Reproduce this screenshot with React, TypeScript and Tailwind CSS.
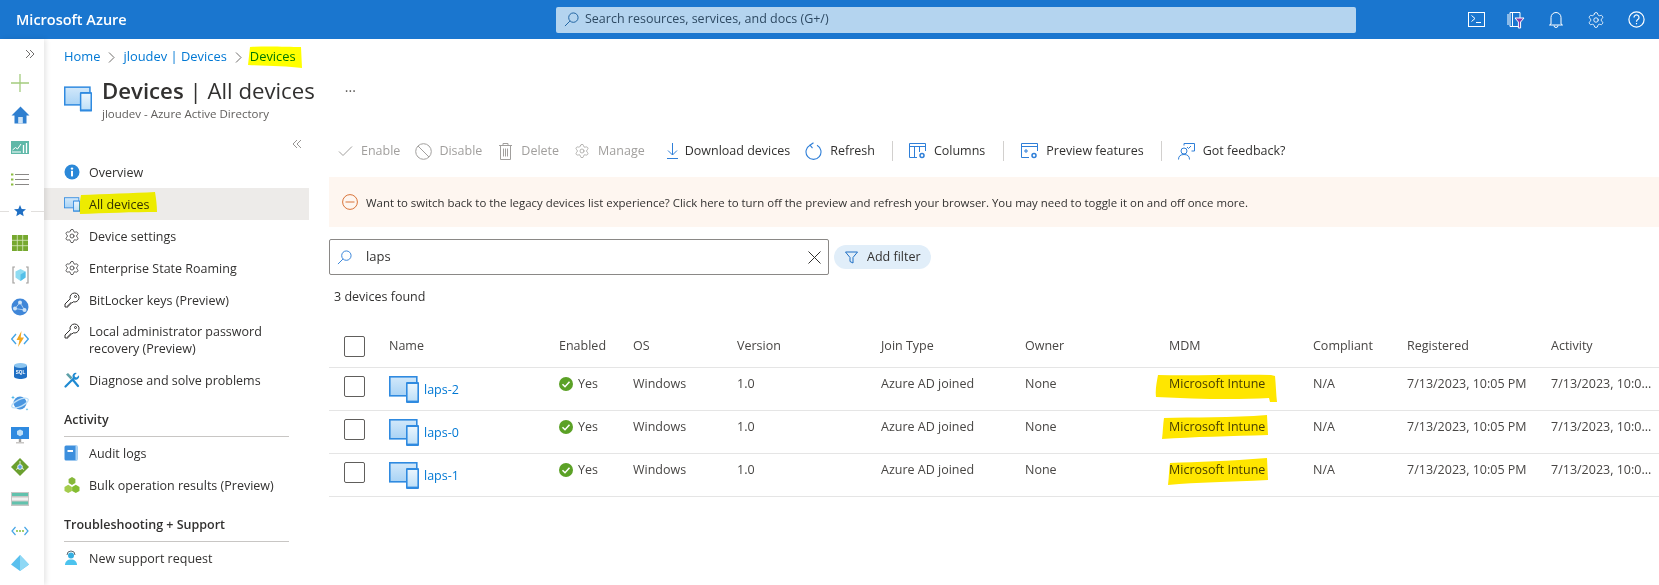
import React from "react";
import { Settings } from "lucide-react";

function DeviceIcon({ w = 28, h = 26, id }: { w?: number; h?: number; id: string }) {
  return (
    <svg width={w} height={h} viewBox="0 0 30 27" className="shrink-0">
      <defs>
        <linearGradient id={id + "a"} x1="0" y1="0" x2="0" y2="1">
          <stop offset="0" stopColor="#d2e8fa" />
          <stop offset="1" stopColor="#a9d3f5" />
        </linearGradient>
        <linearGradient id={id + "b"} x1="0" y1="0" x2="0" y2="1">
          <stop offset="0" stopColor="#eaf5fd" />
          <stop offset="1" stopColor="#bfe0f8" />
        </linearGradient>
      </defs>
      <rect x="0.8" y="0.8" width="27" height="19" fill={`url(#${id}a)`} stroke="#2f8ae0" strokeWidth="1.6" />
      <rect x="17" y="6" width="13" height="21" rx="1" fill="#2f8ae0" />
      <rect x="18.6" y="8" width="9.8" height="16.6" fill={`url(#${id}b)`} />
    </svg>
  );
}

function Gear({ c = "#323130", s = 16 }: { c?: string; s?: number }) {
  return <Settings size={s} color={c} strokeWidth={1.15} className="shrink-0" />;
}

function Key() {
  return (
    <svg width="16" height="16" viewBox="0 0 16 16" fill="none" stroke="#323130" strokeWidth="1" className="shrink-0">
      <path d="M10.5 1a4.5 4.5 0 0 0-4.3 5.8L1 12v3h3v-2h2v-2h2l1.2-1.2A4.5 4.5 0 1 0 10.5 1z" />
      <circle cx="11.5" cy="4.5" r="1" />
    </svg>
  );
}

function NavIcon({ name }: { name: string }) {
  switch (name) {
    case "info":
      return (
        <svg width="16" height="16" viewBox="0 0 16 16" className="shrink-0">
          <circle cx="8" cy="8" r="7.5" fill="#2b88d8" />
          <rect x="7" y="6.8" width="2" height="5.6" fill="#fff" />
          <circle cx="8" cy="4.6" r="1.2" fill="#fff" />
        </svg>
      );
    case "device":
      return <DeviceIcon w={16} h={15} id="nav" />;
    case "gear":
      return <Gear />;
    case "key":
      return <Key />;
    case "wrench":
      return (
        <svg width="16" height="16" viewBox="0 0 16 16" className="shrink-0">
          <path d="M1.500 14.500l6-6M9 8l5 6" stroke="#1f8ad2" strokeWidth="2.200" strokeLinecap="round" />
          <path d="M2 2.600l2-1.600 4.500 4.600-1.800 1.800z" fill="#5ea0a8" />
          <path d="M15 3.200l-2.300 2.200-1.700-.4-.4-1.700L12.800 1a3.400 3.400 0 0 0-4 4.800L7 7.600l1.600 1.600 1.800-1.800A3.400 3.400 0 0 0 15 3.200z" fill="#1f8ad2" />
        </svg>
      );
    case "log":
      return (
        <svg width="14" height="16" viewBox="0 0 14 16" className="shrink-0">
          <rect x="0.500" y="0.500" width="13" height="15" rx="1.500" fill="#3d8fdd" />
          <rect x="11.500" y="0.500" width="2" height="15" fill="#a9d3f5" />
          <rect x="3.500" y="5" width="5.500" height="2" fill="#fff" />
        </svg>
      );
    case "bulk":
      return (
        <svg width="16" height="16" viewBox="0 0 16 16" className="shrink-0">
          <path d="M8 0l3.400 2v4L8 8 4.600 6V2z" fill="#86b83a" />
          <path d="M4.200 7.800l3.700 2.100v4L4.200 16 .5 13.900v-4z" fill="#a4cc4d" />
          <path d="M11.800 7.800l3.700 2.100v4L11.800 16l-3.700-2.100v-4z" fill="#84bd32" />
        </svg>
      );
    case "support":
      return (
        <svg width="14" height="16" viewBox="0 0 14 16" className="shrink-0">
          <path d="M3 5a4 4 0 0 1 8 0" fill="none" stroke="#5c6b73" strokeWidth="1" />
          <circle cx="7" cy="5.500" r="3" fill="#35aee0" />
          <path d="M1 15c0-3.500 2.500-5.500 6-5.500s6 2 6 5.500z" fill="#4cc3ee" />
        </svg>
      );
  }
  return null;
}

function NavItem({ icon, text, tall }: { icon: string; text: React.ReactNode; tall?: boolean }) {
  return (
    <div className={tall ? "flex h-12 items-start pl-5 pt-[7px]" : "flex h-8 items-center pl-5"}>
      <div className="w-[25px] shrink-0">
        <NavIcon name={icon} />
      </div>
      <span className="text-[12.5px] leading-[17px] text-[#323130]">{text}</span>
    </div>
  );
}

function NavHeader({ children }: { children: React.ReactNode }) {
  return (
    <div className="ml-5 mr-5 flex h-[41px] items-end border-b border-[#c8c6c4] pb-[8px] text-[12.5px] leading-[17px] font-semibold text-[#323130]">
      {children}
    </div>
  );
}

function RailSlot({ children }: { children: React.ReactNode }) {
  return <div className="flex h-8 w-full items-center justify-center pr-[4px]">{children}</div>;
}

function Rail() {
  return (
    <div className="relative z-10 flex h-full w-11 shrink-0 flex-col bg-white shadow-[2px_0_5px_rgba(0,0,0,0.1)]">
      <div className="flex h-[28px] items-center justify-end pr-[9px] pt-[1px]">
        <svg width="10" height="10" viewBox="0 0 10 10" fill="none" stroke="#605e5c" strokeWidth="0.9">
          <path d="M1 1l4 4-4 4M5 1l4 4-4 4" />
        </svg>
      </div>
      <RailSlot>
        <svg width="18" height="18" viewBox="0 0 18 18"><path d="M9 0v18M0 9h18" stroke="#a4cc7e" strokeWidth="1.300" /></svg>
      </RailSlot>
      <RailSlot>
        <svg width="19" height="18" viewBox="0 0 19 18">
          <path d="M9.500 0.500L0.500 9.500h3V17.500h12V9.500h3z" fill="#2f7fd0" />
          <rect x="7.200" y="11" width="4.600" height="6.500" fill="#cfe4f7" />
        </svg>
      </RailSlot>
      <RailSlot>
        <svg width="18" height="13" viewBox="0 0 18 13">
          <rect width="18" height="13" fill="#5fb8a8" />
          <path d="M1.500 9l3-2.500 2 1.500L10 3" stroke="#fff" strokeWidth="1" fill="none" />
          <path d="M1 11h9" stroke="#fff" strokeWidth="1" />
          <path d="M12.500 4v8M15.500 2v10" stroke="#fff" strokeWidth="1.300" />
        </svg>
      </RailSlot>
      <RailSlot>
        <svg width="18" height="13" viewBox="0 0 18 13">
          <path d="M4 1.500h14M4 6.500h14M4 11.500h14" stroke="#8a8886" strokeWidth="1.200" />
          <path d="M0 1.500h2.400M0 6.500h2.400M0 11.500h2.400" stroke="#8cbd3f" strokeWidth="2" />
        </svg>
      </RailSlot>
      <div className="relative flex h-8 items-center justify-center pr-[4px]">
        <div className="absolute left-0 top-1/2 h-px w-[9px] bg-[#e1dfdd]" />
        <div className="absolute right-0 top-1/2 h-px w-[13px] bg-[#e1dfdd]" />
        <svg width="12" height="12" viewBox="0 0 12 12"><path d="M6 0l1.700 3.900 4.300.4-3.200 2.800.9 4.200L6 9.100l-3.700 2.200.9-4.200L0 4.300l4.300-.4z" fill="#1f6fc4" /></svg>
      </div>
      <RailSlot>
        <svg width="16" height="16" viewBox="0 0 16 16">
          <rect width="16" height="16" fill="#76a82f" />
          <path d="M5.300 0v16M10.700 0v16M0 5.300h16M0 10.700h16" stroke="#d8e8bf" strokeWidth="0.800" />
        </svg>
      </RailSlot>
      <RailSlot>
        <svg width="17" height="18" viewBox="0 0 17 18">
          <path d="M3 1H1v16h2M14 1h2v16h-2" fill="none" stroke="#a19f9d" strokeWidth="1.200" />
          <path d="M8.500 3l5 2.500v6L8.500 15l-5-3.500v-6z" fill="#8fdcf2" />
          <path d="M8.500 8.500L13.500 5.500v6L8.500 15z" fill="#55bfe8" />
        </svg>
      </RailSlot>
      <RailSlot>
        <svg width="18" height="18" viewBox="0 0 18 18">
          <circle cx="9" cy="9" r="8.500" fill="#3f86d8" />
          <circle cx="9" cy="4.500" r="2" fill="#cfe4f7" />
          <circle cx="4" cy="10.500" r="2" fill="#cfe4f7" />
          <circle cx="13.500" cy="12" r="2" fill="#cfe4f7" />
          <path d="M9 4.500L4 10.500 13.500 12z" stroke="#cfe4f7" strokeWidth="0.700" fill="none" />
        </svg>
      </RailSlot>
      <RailSlot>
        <svg width="18" height="16" viewBox="0 0 18 16">
          <path d="M5 3L0.700 8 5 13M13 3l4.300 5L13 13" fill="none" stroke="#45a5e6" strokeWidth="1.400" />
          <path d="M10.500 0L5.500 9h3L7 16l6-9.500H9.700z" fill="#f2a71e" />
        </svg>
      </RailSlot>
      <RailSlot>
        <svg width="13" height="16" viewBox="0 0 13 16">
          <path d="M0 2.500v11C0 15 3 16 6.500 16S13 15 13 13.500v-11z" fill="#1f6fc4" />
          <ellipse cx="6.500" cy="2.500" rx="6.500" ry="2.500" fill="#8cc5f0" />
          <text x="6.500" y="10.500" textAnchor="middle" fontSize="4.600" fontWeight="700" fill="#fff" fontFamily="Liberation Sans">SQL</text>
        </svg>
      </RailSlot>
      <RailSlot>
        <svg width="18" height="18" viewBox="0 0 18 18">
          <circle cx="9" cy="9" r="6.500" fill="#4a96e0" />
          <ellipse cx="9" cy="9" rx="9" ry="3.500" transform="rotate(-25 9 9)" fill="none" stroke="#bfe0f8" strokeWidth="1.300" />
          <path d="M2 1.500l.6 1.400L4 3.500l-1.400.6L2 5.500l-.6-1.400L0 3.500l1.400-.6zM16 14l.4 1 1 .4-1 .4-.4 1-.4-1-1-.4 1-.4z" fill="#4ab5e8" />
        </svg>
      </RailSlot>
      <RailSlot>
        <svg width="18" height="17" viewBox="0 0 18 17">
          <rect width="18" height="12" fill="#2f8ae0" />
          <path d="M9 2.500l3 1.500v3.500l-3 1.800-3-1.800V4z" fill="#bfe0f8" />
          <rect x="7.800" y="12" width="2.400" height="3" fill="#a19f9d" />
          <rect x="5" y="15" width="8" height="1.500" fill="#c8c6c4" />
        </svg>
      </RailSlot>
      <RailSlot>
        <svg width="18" height="18" viewBox="0 0 18 18">
          <path d="M9 0l9 9-9 9-9-9z" fill="#6ba02f" />
          <circle cx="9" cy="9" r="2.400" fill="#5ea0e8" stroke="#fff" strokeWidth="0.800" />
          <path d="M9 3v3.500M5 11.500l2.500-1.500M13 11.500L10.500 10" stroke="#fff" strokeWidth="0.800" />
        </svg>
      </RailSlot>
      <RailSlot>
        <svg width="18" height="14" viewBox="0 0 18 14">
          <rect width="18" height="14" fill="#c8c6c4" />
          <rect x="1" y="1" width="16" height="3" fill="#62c2ad" />
          <rect x="1" y="5.500" width="16" height="3" fill="#f3f2f1" />
          <rect x="1" y="9.500" width="16" height="3" fill="#62c2ad" />
        </svg>
      </RailSlot>
      <RailSlot>
        <svg width="18" height="10" viewBox="0 0 18 10">
          <path d="M4.500 1L1 5l3.500 4M13.500 1L17 5l-3.500 4" fill="none" stroke="#45a5e6" strokeWidth="1.200" />
          <circle cx="6" cy="5" r="0.900" fill="#76b82a" />
          <circle cx="9" cy="5" r="0.900" fill="#76b82a" />
          <circle cx="12" cy="5" r="0.900" fill="#76b82a" />
        </svg>
      </RailSlot>
      <RailSlot>
        <svg width="18" height="16" viewBox="0 0 18 16">
          <path d="M9 0L0 9.500 9 16l9-6.500z" fill="#5ac0ee" />
          <path d="M9 0v16l9-6.500z" fill="#8fd8f5" />
        </svg>
      </RailSlot>
    </div>
  );
}

function TopBar() {
  return (
    <div className="relative flex h-[39px] shrink-0 items-center bg-[#1a76cf]">
      <span className="ml-4 w-[540px] text-[14.5px] font-semibold text-white">Microsoft Azure</span>
      <div className="flex h-[26px] w-[800px] items-center rounded-[2px] bg-[#b4d4ef] pl-[8px]">
        <svg width="15" height="15" viewBox="0 0 16 16" fill="none" stroke="#1a5f9e" strokeWidth="1" className="mr-[6px]">
          <circle cx="10" cy="6" r="5" />
          <path d="M6.300 9.700L1 15" />
        </svg>
        <span className="text-[12.5px] text-[#2e4a63]">Search resources, services, and docs (G+/)</span>
      </div>
      <div className="ml-auto flex items-center pr-[3px]">
        <div className="flex w-10 justify-center">
          <svg width="17" height="15" viewBox="0 0 17 15" fill="none" stroke="#fff" strokeWidth="1">
            <rect x="0.500" y="0.500" width="16" height="14" />
            <path d="M3.500 3.500l3.500 3-3.500 3M8 10.500h5" />
          </svg>
        </div>
        <div className="flex w-10 justify-center">
          <svg width="18" height="18" viewBox="0 0 18 18" fill="none">
            <path d="M3 1.500h10v14H3z" stroke="#fff" strokeWidth="1" />
            <path d="M1 3v11M5.500 1.500v14" stroke="#fff" strokeWidth="1" />
            <path d="M8 7h9l-3.400 4v6h-2.200v-6z" fill="#8a3aa8" stroke="#fff" strokeWidth="1" />
          </svg>
        </div>
        <div className="flex w-10 justify-center">
          <svg width="14" height="17" viewBox="0 0 14 17" fill="none" stroke="#fff" strokeWidth="1">
            <path d="M2 13V6.500a5 5 0 0 1 10 0V13l1.500 1h-13zM5 14.500a2 2 0 0 0 4 0" />
          </svg>
        </div>
        <div className="flex w-10 justify-center">
          <Gear c="#ffffff" s={18} />
        </div>
        <div className="flex w-10 justify-center">
          <svg width="17" height="17" viewBox="0 0 17 17" fill="none" stroke="#fff" strokeWidth="1.200">
            <circle cx="8.500" cy="8.500" r="7.600" />
            <path d="M6 6.500a2.500 2.500 0 1 1 3.800 2.100c-.9.600-1.300 1-1.300 2.100" />
            <path d="M8.500 12v1.300" />
          </svg>
        </div>
      </div>
    </div>
  );
}

function ToolItem({ icon, text, disabled, cls }: { icon: React.ReactNode; text: string; disabled?: boolean; cls: string }) {
  return (
    <div className={"flex items-center " + cls}>
      {icon}
      <span className={"text-[12.5px] " + (disabled ? "text-[#a19f9d]" : "text-[#323130]")}>{text}</span>
    </div>
  );
}

function Sep({ cls }: { cls: string }) {
  return <div className={"h-5 w-px bg-[#d2d0ce] " + cls} />;
}

function Toolbar() {
  const blue = "#2f7fd8";
  return (
    <div className="flex h-[44px] items-center pl-[9px] pt-[2px]">
      <ToolItem disabled cls="mr-[15px]" text="Enable" icon={
        <svg width="15" height="12" viewBox="0 0 15 12" fill="none" stroke="#a19f9d" strokeWidth="1" className="mr-[8px]"><path d="M1 6.500L5 10.500 14 1.500" /></svg>
      } />
      <ToolItem disabled cls="mr-[17px]" text="Disable" icon={
        <svg width="17" height="17" viewBox="0 0 17 17" fill="none" stroke="#a19f9d" strokeWidth="1" className="mr-[7px]"><circle cx="8.500" cy="8.500" r="7.800" /><path d="M3 3l11 11" /></svg>
      } />
      <ToolItem disabled cls="mr-[15px]" text="Delete" icon={
        <svg width="13" height="17" viewBox="0 0 13 17" fill="none" stroke="#a19f9d" strokeWidth="1" className="mr-[9px]"><path d="M0 2.500h13M4 2.500V.5h5v2M1.500 2.500v14h10v-14M4.500 5.500v8M6.500 5.500v8M8.500 5.500v8" /></svg>
      } />
      <ToolItem disabled cls="mr-[18px]" text="Manage" icon={
        <span className="mr-[8px]"><Gear c="#a19f9d" /></span>
      } />
      <ToolItem cls="mr-[15px]" text="Download devices" icon={
        <svg width="11" height="16" viewBox="0 0 11 16" fill="none" stroke={blue} strokeWidth="1" className="mr-[7px] ml-[4px]"><path d="M5.500 0v12M1 7.500l4.500 4.500L10 7.500M0 15.500h11" /></svg>
      } />
      <ToolItem cls="" text="Refresh" icon={
        <svg width="17" height="18" viewBox="0 0 17 18" fill="none" stroke={blue} strokeWidth="1.100" className="mr-[8px]"><path d="M5 3.200a7.500 7.500 0 1 0 7 0" /><path d="M8.500.8L5 3.200l2.500 3" /></svg>
      } />
      <Sep cls="ml-[17px] mr-[16px]" />
      <ToolItem cls="" text="Columns" icon={
        <svg width="17" height="16" viewBox="0 0 17 16" fill="none" stroke={blue} strokeWidth="1" className="mr-[8px]"><path d="M8 14.500H.5V.5h16V8M.5 3.500h16M5.500 3.500v11M10.500 3.500V9" /><circle cx="13" cy="12.500" r="2" strokeWidth="1.500" /></svg>
      } />
      <Sep cls="ml-[18px] mr-[17px]" />
      <ToolItem cls="" text="Preview features" icon={
        <svg width="17" height="16" viewBox="0 0 17 16" fill="none" stroke={blue} strokeWidth="1" className="mr-[8px]"><path d="M8 14.500H.5V.5h16V8M.5 3.500h16M4 7h2v2H4z" /><circle cx="13" cy="12.500" r="2" strokeWidth="1.500" /></svg>
      } />
      <Sep cls="ml-[17px] mr-[16px]" />
      <ToolItem cls="" text="Got feedback?" icon={
        <svg width="17" height="17" viewBox="0 0 17 17" fill="none" stroke={blue} strokeWidth="1" className="mr-[8px]"><circle cx="6" cy="8" r="3" /><path d="M.5 16.500c0-3.500 2-5 5.500-5s5.500 1.500 5.500 5M6 2.500V.5h10.500v7.500h-3M9 4l1.500 1.500L13 3" /></svg>
      } />
    </div>
  );
}

const cols = "grid grid-cols-[60px_170px_74px_104px_144px_144px_144px_144px_94px_144px_1fr]";

function Check() {
  return <div className="ml-[15px] h-[21px] w-[21px] rounded-[2px] border border-[#605e5c] bg-white" />;
}

function Row({ name, idx, mark }: { name: string; idx: number; mark: React.ReactNode }) {
  return (
    <div className={cols + " relative h-[43px] border-b border-[#e5e5e5] text-[12.5px] text-[#484644]"}>
      <div className="pt-[8px]"><Check /></div>
      <div className="flex items-start pt-[8px]">
        <DeviceIcon id={"row" + idx} w={30} h={27} />
        <span className="ml-[5px] mt-[5px] leading-[17px] text-[#0078d4]">{name}</span>
      </div>
      <div className="flex items-center pb-[10px]">
        <svg width="14" height="14" viewBox="0 0 14 14" className="mr-[5px]">
          <circle cx="7" cy="7" r="7" fill="#5ba126" />
          <path d="M3.500 7.200l2.500 2.500 4.500-5" fill="none" stroke="#fff" strokeWidth="1.500" />
        </svg>
        Yes
      </div>
      <div className="flex items-center pb-[10px]">Windows</div>
      <div className="flex items-center pb-[10px]">1.0</div>
      <div className="flex items-center pb-[10px]">Azure AD joined</div>
      <div className="flex items-center pb-[10px]">None</div>
      <div className="relative flex items-center pb-[10px]">
        Microsoft Intune
        {mark}
      </div>
      <div className="flex items-center pb-[10px]">N/A</div>
      <div className="flex items-center pb-[10px]">7/13/2023, 10:05 PM</div>
      <div className="flex items-center pb-[10px]">7/13/2023, 10:0...</div>
    </div>
  );
}

function Mark({ cls, d, w, h, color = "#ffe600" }: { cls: string; d: string; w: number; h: number; color?: string }) {
  return (
    <svg width={w} height={h} viewBox={`0 0 ${w} ${h}`} className={"absolute mix-blend-multiply " + cls}>
      <path d={d} fill={color} />
    </svg>
  );
}

function Table() {
  const head = ["", "Name", "Enabled", "OS", "Version", "Join Type", "Owner", "MDM", "Compliant", "Registered", "Activity"];
  return (
    <div className="mt-[20px]">
      <div className={cols + " h-[43px] items-center border-b border-[#e5e5e5] text-[12.5px] font-medium text-[#484644]"}>
        {head.map((h, i) => (i === 0 ? <Check key={i} /> : <div key={i}>{h}</div>))}
      </div>
      <Row name="laps-2" idx={0} mark={
        <Mark cls="left-[-14px] top-[6px]" w={122} h={29} d="M3 1C40 2 80 0 116 1L120 2C121 12 121 20 122 28L115 28L114 24C80 26 40 25 1 23C0 15 2 7 3 1Z" />
      } />
      <Row name="laps-0" idx={1} mark={
        <Mark cls="left-[-7px] top-[4px]" w={106} h={24} d="M2 3C30 2 70 3 105 0L106 20C70 21 30 22 0 24C1 16 1 9 2 3Z" />
      } />
      <Row name="laps-1" idx={2} mark={
        <Mark cls="left-[-1px] top-[4px]" w={100} h={27} d="M2 5C30 4 60 3 99 0L100 22C60 24 30 24 0 27C1 19 1 11 2 5Z" />
      } />
    </div>
  );
}

function Content() {
  return (
    <div className="min-w-0 flex-1 pl-5">
      <Toolbar />
      <div className="mt-[5px] flex h-[50px] items-center bg-[#fef6f0] pl-[13px]">
        <svg width="16" height="16" viewBox="0 0 16 16" fill="none" stroke="#d9743a" strokeWidth="1" className="mr-[8px]">
          <circle cx="8" cy="8" r="7.400" />
          <path d="M3.500 8h9" />
        </svg>
        <span className="pt-[2px] text-[11.43px] text-[#323130]">
          Want to switch back to the legacy devices list experience? Click here to turn off the preview and refresh your browser. You may need to toggle it on and off once more.
        </span>
      </div>
      <div className="mt-3 flex items-center">
        <div className="flex h-[36px] w-[500px] items-center rounded-[2px] border border-[#8a8886] pl-[7px]">
          <svg width="15" height="15" viewBox="0 0 16 16" fill="none" stroke="#2f7fd8" strokeWidth="1" className="mr-[14px]">
            <circle cx="10" cy="6" r="5" />
            <path d="M6.300 9.700L1 15" />
          </svg>
          <span className="text-[13px] text-[#323130]">laps</span>
          <svg width="13" height="13" viewBox="0 0 13 13" fill="none" stroke="#323130" strokeWidth="1" className="ml-auto mr-[7px]">
            <path d="M.5.5l12 12M12.500.5l-12 12" />
          </svg>
        </div>
        <div className="ml-[5px] flex h-[24px] w-[97px] items-center rounded-full bg-[#e1eef9] pl-[11px]">
          <svg width="13" height="13" viewBox="0 0 13 13" fill="none" stroke="#1f6fc4" strokeWidth="1" className="mr-[9px]">
            <path d="M.5 1h12L8 6.500V12l-3-1.500v-4z" />
          </svg>
          <span className="text-[12.5px] text-[#323130]">Add filter</span>
        </div>
      </div>
      <div className="mt-[13px] pl-[5px] text-[12.5px] leading-[17px] text-[#323130]">3 devices found</div>
      <Table />
    </div>
  );
}

function SideNav() {
  return (
    <div className="relative w-[265px] shrink-0">
      <div className="flex h-[28px] items-center justify-end pr-[7px] pt-[4px]">
        <svg width="10" height="10" viewBox="0 0 10 10" fill="none" stroke="#8a8886" strokeWidth="0.900">
          <path d="M5 1L1 5l4 4M9 1L5 5l4 4" />
        </svg>
      </div>
      <NavItem icon="info" text="Overview" />
      <div className="relative bg-[#edebe9]">
        <NavItem icon="device" text="All devices" />
        <Mark color="#ffff00" cls="left-[35px] top-[4px]" w={78} h={22} d="M2 3C25 2 55 1 76 0C77 6 78 14 78 20C55 20 25 21 1 22C0 15 1 8 2 3Z" />
      </div>
      <NavItem icon="gear" text="Device settings" />
      <NavItem icon="gear" text="Enterprise State Roaming" />
      <NavItem icon="key" text="BitLocker keys (Preview)" />
      <NavItem icon="key" tall text={<>Local administrator password<br />recovery (Preview)</>} />
      <NavItem icon="wrench" text="Diagnose and solve problems" />
      <NavHeader>Activity</NavHeader>
      <NavItem icon="log" text="Audit logs" />
      <NavItem icon="bulk" text="Bulk operation results (Preview)" />
      <NavHeader>Troubleshooting + Support</NavHeader>
      <NavItem icon="support" text="New support request" />
    </div>
  );
}

function Chevron() {
  return (
    <svg width="7" height="11" viewBox="0 0 7 11" fill="none" stroke="#605e5c" strokeWidth="0.900" className="mx-[8px]">
      <path d="M1 .5l5 5-5 5" />
    </svg>
  );
}

export default function App() {
  return (
    <div className="flex h-[585px] w-full flex-col overflow-hidden bg-white font-['Open_Sans','Noto_Sans',sans-serif]">
      <TopBar />
      <div className="flex min-h-0 flex-1">
        <Rail />
        <div className="min-w-0 flex-1">
          <div className="flex h-[36px] items-center pl-5 text-[12.9px] text-[#0078d4]">
            <span>Home</span>
            <Chevron />
            <span>jloudev | Devices</span>
            <Chevron />
            <span className="relative">
              Devices
              <Mark color="#ffff00" cls="left-[-2px] top-[-1px]" w={54} h={22} d="M2 1C20 0 40 1 53 1L54 22C40 20 20 20 0 19Z" />
            </span>
          </div>
          <div className="flex h-[53px] pl-5">
            <div className="pt-[11px]"><DeviceIcon id="title" /></div>
            <div className="ml-[10px]">
              <div className="flex h-[32px] items-center text-[22.2px] leading-none text-[#323130]">
                <span className="font-semibold">Devices</span>
                <span>&nbsp;| All devices</span>
                <span className="ml-[30px] text-[14px] text-[#605e5c]">···</span>
              </div>
              <div className="mt-[-1px] text-[11.5px] leading-[16px] text-[#605e5c]">jloudev - Azure Active Directory</div>
            </div>
          </div>
          <div className="flex">
            <SideNav />
            <Content />
          </div>
        </div>
      </div>
    </div>
  );
}
